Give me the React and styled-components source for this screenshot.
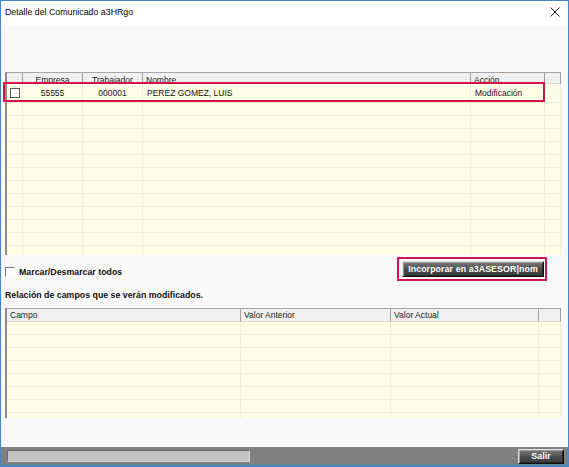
import React from 'react';
import styled, { createGlobalStyle } from 'styled-components';

const GlobalStyle = createGlobalStyle`
  html, body {
    margin: 0;
    padding: 0;
    background: #ffffff;
  }
  body {
    font-family: "Liberation Sans", Arial, sans-serif;
  }
`;

const Window = styled.div`
  width: 569px;
  height: 467px;
  box-sizing: border-box;
  border: 1px solid #3d87d2;
  border-bottom: 2px solid #3d87d2;
  display: flex;
  flex-direction: column;
  background: #f9f9f9;
  overflow: hidden;
`;

const TitleBar = styled.div`
  height: 21px;
  flex: none;
  background: #ffffff;
  display: flex;
  align-items: center;
  justify-content: space-between;
  padding: 0 8px 3px 4px;
  font-size: 8.8px;
  color: #000;
`;

const CloseIcon = styled.svg`
  width: 10px;
  height: 10px;
`;

const Body = styled.div`
  flex: 1;
  padding: 47px 7px 0 4px;
  display: flex;
  flex-direction: column;
`;

const Grid = styled.div`
  position: relative;
  height: ${(p) => p.$height}px;
  border-top: 1px solid #a6a6a6;
  border-left: 2px solid #8c8c8c;
  background: #fffde6;
`;

const GridClip = styled.div`
  height: 100%;
  overflow: hidden;
`;

const Row = styled.div`
  display: grid;
  grid-template-columns: ${(p) => p.$cols};
  height: ${(p) => p.$h}px;
  box-sizing: border-box;
`;

const HeadCell = styled.div`
  background: #f0f0f0;
  border-right: 1px solid #a0a0a0;
  border-bottom: 1px solid #d6d6d6;
  font-size: 8.5px;
  color: #222;
  line-height: ${(p) => p.$lh || 13}px;
  text-align: ${(p) => p.$align || 'left'};
  padding: 0 3px;
  overflow: hidden;
  white-space: nowrap;
`;

const Cell = styled.div`
  border-right: 1px solid #f1efd6;
  border-bottom: 1px solid #f1efd6;
  font-size: 8.5px;
  color: #111;
  display: flex;
  align-items: center;
  justify-content: ${(p) => p.$align || 'flex-start'};
  padding: 0 ${(p) => (p.$tight ? 0 : 4)}px;
  white-space: nowrap;
  overflow: hidden;
`;

const RowBox = styled.span`
  flex: none;
  box-sizing: border-box;
  width: 10px;
  height: 10px;
  border: 1px solid #5a5a5a;
  background: #fff;
`;

const RowHighlight = styled.div`
  position: absolute;
  left: -4px;
  top: 9px;
  width: 542px;
  height: 20px;
  box-sizing: border-box;
  border: 2px solid #d3144c;
  pointer-events: none;
`;

const ActionBar = styled.div`
  height: 27px;
  display: flex;
  align-items: flex-end;
  justify-content: space-between;
  padding-right: 14px;
`;

const CheckLabel = styled.label`
  display: flex;
  align-items: center;
  gap: 4px;
  font-size: 8.8px;
  font-weight: bold;
  color: #111;
  margin-bottom: 5px;
`;

const ClassicBox = styled.span`
  width: 8px;
  height: 8px;
  border-top: 1px solid #7a7a7a;
  border-left: 1px solid #7a7a7a;
  border-right: 1px solid #fff;
  border-bottom: 1px solid #fff;
  background: #fff;
`;

const FocusFrame = styled.div`
  border: 2px solid #d3144c;
  padding: 2px 1px 2px 3px;
  margin-bottom: 1px;
  display: flex;
`;

const DarkButton = styled.button`
  width: ${(p) => p.$w}px;
  height: ${(p) => p.$h}px;
  padding: 0;
  font-family: "Liberation Sans", Arial, sans-serif;
  font-size: 8.8px;
  font-weight: bold;
  color: #ffffff;
  letter-spacing: 0.1px;
  background: linear-gradient(#7c7c7c, #4a4a4a 55%, #3a3a3a);
  border-top: 1px solid #e0e0e0;
  border-left: 1px solid #e0e0e0;
  border-right: 1px solid #111;
  border-bottom: 1px solid #111;
  box-shadow: inset 1px 1px 0 #999, inset -1px -1px 0 #2a2a2a;
  line-height: 1;
`;

const SectionLabel = styled.div`
  margin-top: 7px;
  height: 12px;
  font-size: 8.8px;
  font-weight: bold;
  color: #111;
  line-height: 12px;
`;

const SecondGrid = styled(Grid)`
  margin-top: 7px;
`;

const StatusBar = styled.div`
  height: 18px;
  flex: none;
  background: #808080;
  display: flex;
  align-items: center;
  justify-content: space-between;
  padding: 0 4px 0 6px;
`;

const Progress = styled.div`
  width: 243px;
  height: 12px;
  background: #c3c3c3;
  border-top: 1px solid #6a6a6a;
  border-left: 1px solid #6a6a6a;
  border-bottom: 1px solid #d8d8d8;
  border-right: 1px solid #d8d8d8;
  box-sizing: border-box;
`;

const topCols = '16px 60px 60px 328px 74px 1fr';
const bottomCols = '234px 150px 148px 1fr';

function TopGrid() {
  const fillers = Array.from({ length: 12 });
  return (
    <Grid $height={182}>
      <GridClip>
        <Row $cols={topCols} $h={11}>
          <HeadCell />
          <HeadCell $align="center" $lh={14}>Empresa</HeadCell>
          <HeadCell $align="center" $lh={14}>Trabajador</HeadCell>
          <HeadCell $lh={14}>Nombre</HeadCell>
          <HeadCell $lh={14}>Acción</HeadCell>
          <HeadCell />
        </Row>
        <Row $cols={topCols} $h={19}>
          <Cell $align="center" $tight>
            <RowBox />
          </Cell>
          <Cell $align="center">55555</Cell>
          <Cell $align="center">000001</Cell>
          <Cell>PEREZ GOMEZ, LUIS</Cell>
          <Cell>Modificación</Cell>
          <Cell />
        </Row>
        {fillers.map((_, i) => (
          <Row $cols={topCols} $h={13} key={i}>
            <Cell />
            <Cell />
            <Cell />
            <Cell />
            <Cell />
            <Cell />
          </Row>
        ))}
      </GridClip>
      <RowHighlight />
    </Grid>
  );
}

function FieldsGrid() {
  const fillers = Array.from({ length: 8 });
  return (
    <SecondGrid $height={109}>
      <GridClip>
        <Row $cols={bottomCols} $h={13}>
          <HeadCell>Campo</HeadCell>
          <HeadCell>Valor Anterior</HeadCell>
          <HeadCell>Valor Actual</HeadCell>
          <HeadCell />
        </Row>
        {fillers.map((_, i) => (
          <Row $cols={bottomCols} $h={13} key={i}>
            <Cell />
            <Cell />
            <Cell />
            <Cell />
          </Row>
        ))}
      </GridClip>
    </SecondGrid>
  );
}

export default function App() {
  return (
    <>
      <GlobalStyle />
      <Window>
        <TitleBar>
          <span>Detalle del Comunicado a3HRgo</span>
          <CloseIcon viewBox="0 0 10 10">
            <path d="M0.5 0.5 L9.5 9.5 M9.5 0.5 L0.5 9.5" stroke="#222" strokeWidth="1" fill="none" />
          </CloseIcon>
        </TitleBar>
        <Body>
          <TopGrid />
          <ActionBar>
            <CheckLabel>
              <ClassicBox />
              Marcar/Desmarcar todos
            </CheckLabel>
            <FocusFrame>
              <DarkButton $w={142} $h={16}>Incorporar en a3ASESOR|nom</DarkButton>
            </FocusFrame>
          </ActionBar>
          <SectionLabel>Relación de campos que se verán modificados.</SectionLabel>
          <FieldsGrid />
        </Body>
        <StatusBar>
          <Progress />
          <DarkButton $w={46} $h={15}>Salir</DarkButton>
        </StatusBar>
      </Window>
    </>
  );
}
